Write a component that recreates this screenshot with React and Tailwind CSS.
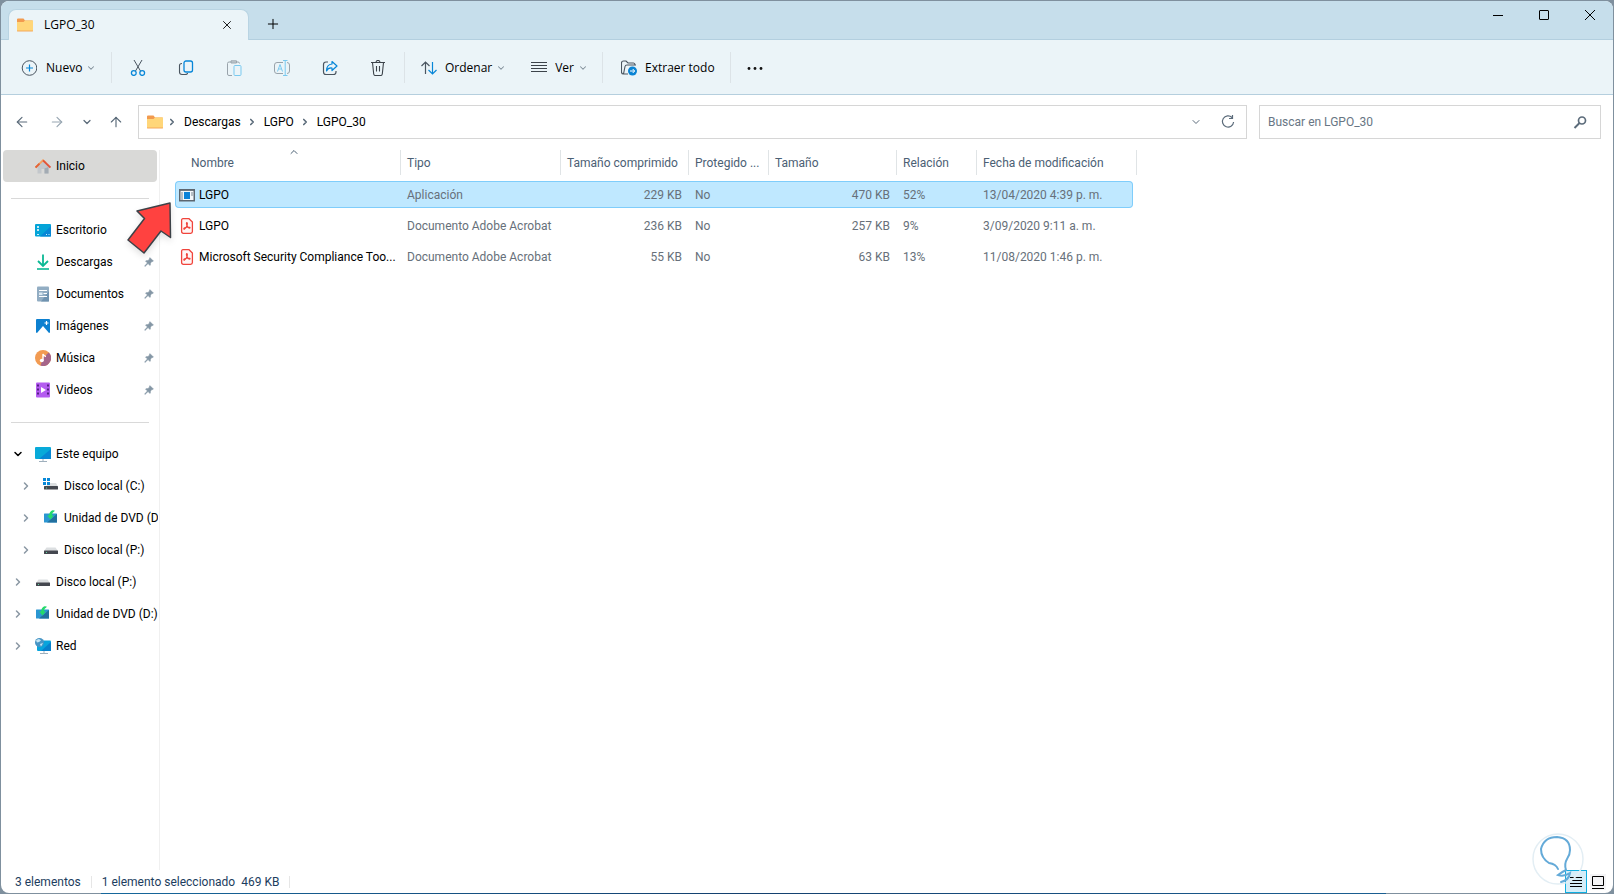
import { ArrowLeft, ArrowRight, ArrowUp, ChevronDown, ChevronRight, ChevronUp, Plus, X } from "lucide-react";
import clsx from "clsx";

const PINNED = [
    { name: "Escritorio", Icon: DesktopIcon },
    { name: "Descargas", Icon: DownloadIcon },
    { name: "Documentos", Icon: DocumentIcon },
    { name: "Imágenes", Icon: ImageIcon },
    { name: "Música", Icon: MusicIcon },
    { name: "Videos", Icon: VideoIcon }
];

const TREE = [
    { name: "Este equipo", Icon: ComputerIcon, open: true },
    { name: "Disco local (C:)", Icon: SystemDriveIcon, nested: true },
    { name: "Unidad de DVD (D:)", Icon: DvdIcon, nested: true },
    { name: "Disco local (P:)", Icon: DriveIcon, nested: true },
    { name: "Disco local (P:)", Icon: DriveIcon },
    { name: "Unidad de DVD (D:)", Icon: DvdIcon },
    { name: "Red", Icon: NetworkIcon }
];

const COLUMNS = ["Nombre", "Tipo", "Tamaño comprimido", "Protegido ...", "Tamaño", "Relación", "Fecha de modificación"];

const FILES = [
    { name: "LGPO", type: "Aplicación", packed: "229 KB", size: "470 KB", ratio: "52%", date: "13/04/2020 4:39 p. m.", Icon: AppIcon, selected: true },
    { name: "LGPO", type: "Documento Adobe Acrobat", packed: "236 KB", size: "257 KB", ratio: "9%", date: "3/09/2020 9:11 a. m.", Icon: PdfIcon },
    { name: "Microsoft Security Compliance Too...", type: "Documento Adobe Acrobat", packed: "55 KB", size: "63 KB", ratio: "13%", date: "11/08/2020 1:46 p. m.", Icon: PdfIcon }
];

function Svg({ children, size = "h-4 w-4", className }) {
    return (
        <svg viewBox="0 0 16 16" className={clsx("shrink-0", size, className)} fill="none" aria-hidden="true">
            {children}
        </svg>
    );
}

function FolderIcon() {
    return (
        <Svg>
            <path d="M0 2.500q0-1 1-1h5.500l1.500 2h7q1 0 1 1V8H0z" fill="#f29a4e" />
            <path d="M0 5h6.500l1.500-1.500h8V14H0z" fill="#ffd679" />
            <path d="M0 13.500h16v.5q0 .5-1 .5H1q-1 0-1-.5z" fill="#f6a85a" />
        </Svg>
    );
}

function HomeIcon() {
    return (
        <Svg>
            <path d="M2.500 7.500 8 3l5.500 4.500V15.500h-4V11h-3v4.500h-4z" fill="#c3c7cb" />
            <path d="M9.500 15.500v-5L13.500 9v6.500z" fill="#a3abb3" />
            <path d="M.6 9.500 8 2.300l3 2.700" stroke="#f4a261" strokeWidth="1.8" />
            <path d="m8 2.300 7.400 7.200" stroke="#e2543a" strokeWidth="1.8" />
            <path d="M.6 9.500 4.500 5.700" stroke="#e2643a" strokeWidth="1.8" />
        </Svg>
    );
}

function DesktopIcon() {
    return (
        <Svg>
            <rect y="2" width="16" height="12.500" rx="1" fill="#04a4d8" />
            <path d="M16 4v10.500H5z" fill="#0787d6" />
            <path d="M2 5h2M2 8h2" stroke="#fff" strokeWidth="1.500" />
            <path d="M2 12.500h2M11 12.500h1M13.500 12.500h1" stroke="#c9efff" />
        </Svg>
    );
}

function DownloadIcon() {
    return (
        <Svg>
            <path d="M8 .5v11M3 7l5 5 5-5" stroke="#0bb894" strokeWidth="1.800" />
            <path d="M2 15h12" stroke="#0bb894" strokeWidth="1.600" />
        </Svg>
    );
}

function DocumentIcon() {
    return (
        <Svg>
            <rect x="2" y=".5" width="12" height="15" rx="1" fill="#92adc3" />
            <path d="M14 5v10.500H6z" fill="#7093b0" />
            <path d="M4 4.500h8M8.500 7.500H12M4 10.500h8" stroke="#fff" strokeWidth="1.200" />
            <path d="M4 6.500h3.500v2.500H4z" fill="#dbe8f2" />
        </Svg>
    );
}

function ImageIcon() {
    return (
        <Svg>
            <rect x="1" y="1" width="14" height="14" rx="1" fill="#0c80d0" />
            <path d="m2 15 6-7 6 7z" fill="#fff" />
            <path d="M11.500 3v4M9.500 5h4" stroke="#fff" strokeWidth="1.200" />
        </Svg>
    );
}

function MusicIcon() {
    return (
        <Svg>
            <circle cx="8" cy="8" r="8" fill="#f29b52" />
            <path d="M8 8 13.700 2.400A8 8 0 0 1 5.500 15.600z" fill="#a5658a" />
            <ellipse cx="6.800" cy="10.500" rx="2" ry="1.700" fill="#fff" />
            <path d="M8 10.500V4q1 2 3 2.500" stroke="#fff" strokeWidth="1.400" />
        </Svg>
    );
}

function VideoIcon() {
    return (
        <Svg>
            <rect x="1" y=".5" width="14" height="15" rx="1" fill="#b45cf0" />
            <path d="M3 2.500v12M13 2.500v12" stroke="#4a1a78" strokeWidth="1.800" strokeDasharray="2 2" />
            <path d="m6 5 5 3-5 3z" fill="#fff" />
        </Svg>
    );
}

function ComputerIcon() {
    return (
        <Svg>
            <rect y="1" width="16" height="12" rx="1" fill="#08aad9" />
            <path d="M16 3v10H4z" fill="#0788d4" />
            <path d="M8 13v2M4 15.500h8" stroke="#9fb0bd" />
        </Svg>
    );
}

function DriveIcon() {
    return (
        <Svg>
            <path d="M3.500 5.500h9L15 9H1z" fill="#dcdfe1" />
            <rect x="1" y="8.500" width="14" height="3.500" rx=".5" fill="#44474f" />
            <path d="M3 10.500h1" stroke="#5fd6a0" />
        </Svg>
    );
}

function SystemDriveIcon() {
    return (
        <Svg>
            <path d="M6 5h7l2 3.500H3z" fill="#dcdfe1" />
            <rect x="1" y="8" width="14" height="3.500" rx=".5" fill="#44474f" />
            <path d="M3 10h1" stroke="#5fd6a0" />
            <path d="M0 0h3v3H0zM4 0h3v3H4zM0 4h3v3H0zM4 4h3v3H4z" fill="#0788d8" />
        </Svg>
    );
}

function DvdIcon() {
    return (
        <Svg>
            <rect x="1" y="3.500" width="13" height="9" rx=".5" fill="#2b96d2" />
            <path d="M14 4v8.500H4z" fill="#22709f" />
            <path d="m4 5.500 3.500 4 3.500-4H9Q9 2.500 12 .8 11 0 9.500.2 6.300 1.500 6 5.500z" fill="#23d96c" />
        </Svg>
    );
}

function NetworkIcon() {
    return (
        <Svg>
            <rect x="2" y="2.500" width="14" height="10.500" rx="1" fill="#08a4dc" />
            <path d="M16 4v9H6z" fill="#0780cc" />
            <path d="M9 13v2M5 15.500h8" stroke="#9fb0bd" />
            <circle cx="4.500" cy="4.500" r="4.500" fill="#4795c5" />
            <path d="M1 2.500q3-3 5 0-2 2-4 2zM5 6l3-1-2 3.500z" fill="#c5e6f6" />
        </Svg>
    );
}

function AppIcon() {
    return (
        <Svg>
            <rect x=".75" y="2.750" width="14.500" height="11" fill="#f4f8fb" stroke="#5c6670" strokeWidth="1.500" />
            <path d="M0 3h16" stroke="#5c6670" strokeWidth="1.500" />
            <path d="M5 5h6v7H5z" fill="#0a82d8" />
            <path d="M2 6h2M2 8h2M2 10h2M2 12h2M12 6h2M12 8h2" stroke="#7b8791" />
        </Svg>
    );
}

function PdfIcon() {
    return (
        <Svg>
            <path d="M4 .7H10L13.400 4v9.500q0 1.800-1.800 1.800H4.400q-1.800 0-1.800-1.800V2.200Q2.600.7 4 .7z" fill="#fff6f5" stroke="#f0443c" strokeWidth="1.300" />
            <path d="M7.600 4.600q1.200 0 .6 2.200-.8 3-3 4.500-1.200-.7.500-1.600 2.500-1.200 5-.5.900.9-.3 1-1.600-.4-2.700-3.400-.6-1.800-.1-2.200z" stroke="#f0443c" strokeWidth="1.100" />
        </Svg>
    );
}

function PinIcon() {
    return (
        <Svg size="h-2.5 w-2.5">
            <path d="m9.500 1 5.500 5.500-1.500.7-.8-.2-2.500 2.800q.5 2.200-.7 3.700L6.500 10.500 1.500 15l-.5-.5 4.500-5L2.500 6.500q1.500-1.200 3.700-.7L9 3.300l-.2-.8z" fill="#8496a5" stroke="#8496a5" />
        </Svg>
    );
}

function ToolButton({ label, disabled, children }) {
    return (
        <button type="button" aria-label={label} disabled={disabled} className="flex h-10 w-12 items-center justify-center">
            <Svg className={disabled && "opacity-50"}>{children}</Svg>
        </button>
    );
}

function Divider() {
    return <div className="h-[31px] w-px shrink-0 bg-[#dce3e7]" />;
}

function DropMark() {
    return <ChevronDown className="ml-1 h-2.5 w-2.5 text-[#7d8b97]" strokeWidth={2.5} />;
}

function TitleBar() {
    return (
        <div className="flex h-[39px] items-end border-b border-[#b3cfdf] bg-[#c6deeb] pl-[7px] font-['Open_Sans',sans-serif]">
            <div className="-mb-px flex h-[31px] w-[241px] items-center rounded-t-lg border border-b-0 border-[#b9d4e3] bg-[#ebf4f8] pl-2 pr-2.5">
                <FolderIcon />
                <span className="ml-[11px] flex-1 font-medium">LGPO_30</span>
                <button type="button" aria-label="Cerrar pestaña" className="p-1"><X className="h-3.5 w-3.5" strokeWidth={1.5} /></button>
            </div>
            <button type="button" aria-label="Nueva pestaña" className="ml-4 flex h-[30px] w-4 items-center justify-center"><Plus className="h-4 w-4 shrink-0" strokeWidth={1.5} /></button>
            <div className="ml-auto flex self-start">
                <button type="button" aria-label="Minimizar" className="flex h-7 w-[46px] items-center justify-center"><Svg><path d="M3 8.500h10" stroke="#000" /></Svg></button>
                <button type="button" aria-label="Maximizar" className="flex h-7 w-[46px] items-center justify-center"><Svg><rect x="3.500" y="3.500" width="9" height="9" rx=".5" stroke="#000" /></Svg></button>
                <button type="button" aria-label="Cerrar" className="flex h-7 w-[46px] items-center justify-center"><Svg><path d="m3 3 10 10M13 3 3 13" stroke="#000" /></Svg></button>
            </div>
        </div>
    );
}

function Toolbar() {
    return (
        <div className="flex h-[55px] items-center border-b border-[#b5cfde] bg-[#ebf4f8] pt-px font-['Open_Sans',sans-serif]">
            <button type="button" className="flex h-10 w-[110px] items-center pl-5">
                <Svg>
                    <circle cx="8.500" cy="8" r="7.300" stroke="#4a5560" />
                    <path d="M8.500 4.500v7M5 8h7" stroke="#0786d8" strokeWidth="1.200" />
                </Svg>
                <span className="ml-[9px]">Nuevo</span>
                <DropMark />
            </button>
            <Divider />
            <div className="flex px-0.5">
                <ToolButton label="Cortar">
                    <path d="m4 0 6.500 11M12 0 5.500 11" stroke="#4a5560" />
                    <circle cx="3.800" cy="13" r="2.400" stroke="#0786d8" strokeWidth="1.300" />
                    <circle cx="12.200" cy="13" r="2.400" stroke="#0786d8" strokeWidth="1.300" />
                </ToolButton>
                <ToolButton label="Copiar">
                    <path d="M4 3.500q-2.500 0-2.500 2v6.500q0 2.500 2.500 2.500h3q2.500 0 2.500-1.500" stroke="#4a5560" strokeWidth="1.100" />
                    <rect x="6" y="1" width="8.500" height="11" rx="2" stroke="#0786d8" strokeWidth="1.300" />
                </ToolButton>
                <ToolButton label="Pegar" disabled>
                    <path d="M6 15.500H3q-1.500 0-1.500-1.500V3.500Q1.500 2 3 2h9q1.500 0 1.500 1.500M5 3V.8h5.500V3z" stroke="#4a5560" />
                    <rect x="8" y="5.500" width="7" height="10" rx="1" stroke="#0a9fe8" />
                </ToolButton>
                <ToolButton label="Cambiar nombre" disabled>
                    <path d="M9 2.500H3Q.5 2.500.5 5v6q0 2.500 2.500 2.500h6M13 2.500q2.500 0 2.500 2.500v6q0 2.500-2.500 2.500" stroke="#4a5560" />
                    <path d="M3.500 11.500 6 4.500l2.500 7M4.500 9h3M9 .5h4.500M9 15.500h4.500M11.200.5v15" stroke="#0a9fe8" />
                </ToolButton>
                <ToolButton label="Compartir">
                    <path d="M6 2H4Q1.500 2 1.500 4.500v7.500q0 2.500 2.500 2.500h7.500q2.500 0 2.500-2.500v-1" stroke="#4a5560" strokeWidth="1.200" />
                    <path d="m10 1.500 5 4.500-5 4.500V8Q6 7.500 4.500 11q0-6.500 5.500-7z" stroke="#0786d8" strokeWidth="1.200" strokeLinejoin="round" />
                </ToolButton>
                <ToolButton label="Eliminar">
                    <path d="M1 2.500h14M6 2.500q0-2 2-2t2 2M2.500 2.500l1.200 11.500q.2 1.500 1.500 1.500h5.600q1.300 0 1.500-1.500l1.200-11.500M6.500 6v5.500M9.500 6v5.500" stroke="#3c434a" strokeWidth="1.100" />
                </ToolButton>
            </div>
            <Divider />
            <div className="flex w-[197px] items-center pl-4">
                <button type="button" className="flex h-10 items-center">
                    <Svg>
                        <path d="M4.500 14V2M.5 6l4-4 4 4" stroke="#4a5560" strokeWidth="1.200" />
                        <path d="M11.500 2v12M7.500 10l4 4 4-4" stroke="#0786d8" strokeWidth="1.200" />
                    </Svg>
                    <span className="ml-2">Ordenar</span>
                    <DropMark />
                </button>
                <button type="button" className="ml-auto mr-3.5 flex h-10 items-center">
                    <Svg><path d="M0 2.500h16M0 5.500h16M0 8.500h16M0 11.500h16" stroke="#3c434a" /></Svg>
                    <span className="ml-2">Ver</span>
                    <DropMark />
                </button>
            </div>
            <Divider />
            <button type="button" className="flex h-10 w-[127px] items-center pl-[18px]">
                <Svg>
                    <path d="M2.500 14 4 6.500q.3-1.500 2-1.500h9M2.500 14Q.5 14 .5 12V3Q.5 1 2.500 1H5l2 2h5.500q1.500 0 1.500 2M2.500 14H7" stroke="#4a5560" strokeWidth="1.100" />
                    <circle cx="11.500" cy="11" r="4.500" fill="#0a84d4" />
                    <path d="M9 11h4.500M11.700 9l2 2-2 2" stroke="#fff" />
                </Svg>
                <span className="ml-2">Extraer todo</span>
            </button>
            <Divider />
            <ToolButton label="Más opciones">
                <circle cx="2" cy="8.500" r="1.400" fill="#111" />
                <circle cx="8" cy="8.500" r="1.400" fill="#111" />
                <circle cx="14" cy="8.500" r="1.400" fill="#111" />
            </ToolButton>
        </div>
    );
}

function AddressRow() {
    return (
        <div className="flex items-center pb-[11px] pl-[13px] pr-3 pt-2.5 text-[#5b6b7a]">
            <nav className="flex w-[124px] items-center" aria-label="Historial">
                <button type="button" aria-label="Atrás"><ArrowLeft className="h-4 w-4" strokeWidth={1.75} /></button>
                <button type="button" aria-label="Adelante" className="ml-[19px] text-[#98a6b2]"><ArrowRight className="h-4 w-4" strokeWidth={1.75} /></button>
                <button type="button" aria-label="Recientes" className="ml-4"><ChevronDown className="h-3 w-3" strokeWidth={2.5} /></button>
                <button type="button" aria-label="Subir" className="ml-[15px]"><ArrowUp className="h-4 w-4" strokeWidth={1.75} /></button>
            </nav>
            <div className="flex h-[34px] min-w-0 flex-1 items-center border border-[#d6d6d6] pl-2 pr-2.5">
                <FolderIcon />
                {["Descargas", "LGPO", "LGPO_30"].map((part) => (
                    <span key={part} className="flex items-center">
                        <ChevronRight className="mx-1 h-2.5 w-2.5" strokeWidth={4} />
                        <a href="#" className="pl-[3px] pr-0.5 text-black">{part}</a>
                    </span>
                ))}
                <button type="button" aria-label="Ubicaciones anteriores" className="ml-auto"><ChevronDown className="h-3 w-3" /></button>
                <button type="button" aria-label="Actualizar" className="ml-[18px]">
                    <Svg><path d="M12 3.500A5.600 5.600 0 1 0 13.600 8M12.500 1v3.500H9" stroke="#5b6b7a" strokeWidth="1.200" /></Svg>
                </button>
            </div>
            <div className="ml-3 flex h-[34px] w-[342px] items-center border border-[#d6d6d6] pl-2 pr-3">
                <input type="text" aria-label="Buscar" placeholder="Buscar en LGPO_30" className="min-w-0 flex-1 outline-none placeholder:text-[#687684]" />
                <Svg>
                    <circle cx="10" cy="6.500" r="3.500" stroke="#5b6b7a" strokeWidth="1.700" />
                    <path d="m7.500 9-5 5" stroke="#5b6b7a" strokeWidth="2" />
                </Svg>
            </div>
        </div>
    );
}

function Sidebar() {
    return (
        <aside className="w-[159px] shrink-0 border-r border-[#f0f0f0]">
            <a href="#" className="mx-0.5 flex h-8 items-center rounded-sm bg-[#d9d9d7] pl-8">
                <HomeIcon />
                <span className="ml-[5px]">Inicio</span>
            </a>
            <div className="mx-2.5 flex h-8 items-center"><hr className="w-full border-[#d9d9d9]" /></div>
            {PINNED.map(({ name, Icon }) => (
                <a key={name} href="#" className="flex h-8 items-center pl-[34px] pr-[5px]">
                    <Icon />
                    <span className="ml-[5px] flex-1">{name}</span>
                    <PinIcon />
                </a>
            ))}
            <div className="mx-2.5 flex h-8 items-center"><hr className="w-full border-[#d9d9d9]" /></div>
            {TREE.map(({ name, Icon, open, nested }) => (
                <a key={name + nested} href="#" className={clsx("mr-px flex h-8 items-center overflow-hidden whitespace-nowrap", nested ? "pl-[19px]" : "pl-[11px]")}>
                    {open
                        ? <ChevronDown className="h-3 w-3 shrink-0" strokeWidth={3} />
                        : <ChevronRight className="h-3 w-3 shrink-0 text-[#8a97a3]" strokeWidth={3} />}
                    <span className="ml-[11px]"><Icon /></span>
                    <span className="ml-[5px]">{name}</span>
                </a>
            ))}
        </aside>
    );
}

function FileTable() {
    return (
        <table className="-mt-1 ml-[15px] w-[962px] table-fixed border-separate border-spacing-x-0 border-spacing-y-1 self-start text-left">
            <colgroup>
                <col className="w-[226px]" />
                <col className="w-40" />
                <col className="w-32" />
                <col className="w-20" />
                <col className="w-32" />
                <col className="w-20" />
                <col className="w-[156px]" />
                <col className="w-1" />
            </colgroup>
            <thead>
                <tr className="h-[27px] whitespace-nowrap text-[#4b6074]">
                    {COLUMNS.map((label, i) => (
                        <th key={label} scope="col" className="relative p-0 align-top font-normal">
                            <div className={clsx("h-[25px] leading-[26px]", i === 0 ? "pl-4" : "pl-1.5", i < 6 && "border-r border-[#e0e4e6]")}>{label}</div>
                            {i === 0 && <ChevronUp className="absolute -top-1 left-1/2 h-3 w-3" strokeWidth={2} />}
                        </th>
                    ))}
                    <td className="p-0 align-top"><div className="h-[25px] border-r border-[#e0e4e6]" /></td>
                </tr>
            </thead>
            <tbody>
                {FILES.map(({ Icon, ...file }) => {
                    const cell = clsx("border-y p-0 pl-1.5", file.selected ? "border-[#7fcdfb] bg-[#bfe8ff]" : "border-transparent");
                    return (
                        <tr key={file.date} className="h-[27px] whitespace-nowrap text-[#67707a]">
                            <td className={clsx(cell, "rounded-l-sm border-l")}>
                                <div className="-ml-[3px] flex items-center text-black">
                                    <Icon />
                                    <span className="ml-1">{file.name}</span>
                                </div>
                            </td>
                            <td className={cell}>{file.type}</td>
                            <td className={clsx(cell, "pr-[7px] text-right")}>{file.packed}</td>
                            <td className={cell}>No</td>
                            <td className={clsx(cell, "pr-[7px] text-right")}>{file.size}</td>
                            <td className={cell}>{file.ratio}</td>
                            <td className={clsx(cell, "rounded-r-sm border-r")}>{file.date}</td>
                        </tr>
                    );
                })}
            </tbody>
        </table>
    );
}

function StatusBar() {
    return (
        <footer className="flex h-[23px] items-center pl-3.5 text-[#1c3d5e]">
            <span>3 elementos</span>
            <span className="mx-2.5 h-3 w-px bg-[#e6e6e6]" />
            <span>1 elemento seleccionado</span>
            <span className="ml-1.5">469 KB</span>
            <span className="mx-2.5 h-3 w-px bg-[#e6e6e6]" />
            <div className="ml-auto flex items-center gap-[3px] pr-[7px]">
                <button type="button" aria-label="Detalles" className="flex h-[23px] w-[22px] items-center justify-center border border-[#10aee0] bg-[#d4edf8]">
                    <Svg><path d="M2 3.500h12M2 6.500h12M2 9.500h12M2 12.500h12" stroke="#000" /></Svg>
                </button>
                <button type="button" aria-label="Iconos grandes" className="flex h-4 w-4 items-center justify-center bg-[#f4f4f6]">
                    <Svg><path d="M2.500 2.500h11v9h-11zM2 14.500h12" stroke="#000" /></Svg>
                </button>
            </div>
        </footer>
    );
}

export default function App() {
    return (
        <div className="flex min-h-screen flex-col bg-[#7f909e] font-['Roboto',sans-serif] text-[12px] leading-4 text-black">
            <div className="relative mx-px mt-px flex flex-1 flex-col overflow-hidden rounded-lg bg-white">
                <TitleBar />
                <Toolbar />
                <AddressRow />
                <main className="flex flex-1">
                    <Sidebar />
                    <FileTable />
                </main>
                <StatusBar />

                {/* pointer towards the selected file */}
                <svg viewBox="0 0 48 54" className="absolute left-[125px] top-[200px] h-[54px] w-12 drop-shadow-md" aria-hidden="true">
                    <path d="M44 2 11 10l7.500 7.500L2 39l16 13 17-22 9.500 6.500z" fill="#ff4240" stroke="#3c4248" strokeWidth="1.500" strokeLinejoin="round" />
                </svg>
                {/* watermark */}
                <svg viewBox="0 0 54 54" className="pointer-events-none absolute bottom-[7px] right-7 h-[54px] w-[54px]" fill="none" aria-hidden="true">
                    <circle cx="27" cy="27" r="25" stroke="#e3eef4" strokeWidth="1.500" />
                    <path d="M27 37Q25 32 18 31 10 26 10 17 13 5 26 5q13 1 13 13 0 5-3 9-3 5-1 11-4 2-8 5 6 2 12-2-1 7-9 9" stroke="#64aad8" strokeWidth="2" strokeLinecap="round" />
                </svg>
            </div>
            {/* wallpaper showing under the window */}
            <div className="ml-[101px] mr-[228px] h-px bg-linear-to-r from-[#16689c] via-[#14406e] to-[#1a5f92]" />
        </div>
    );
}
